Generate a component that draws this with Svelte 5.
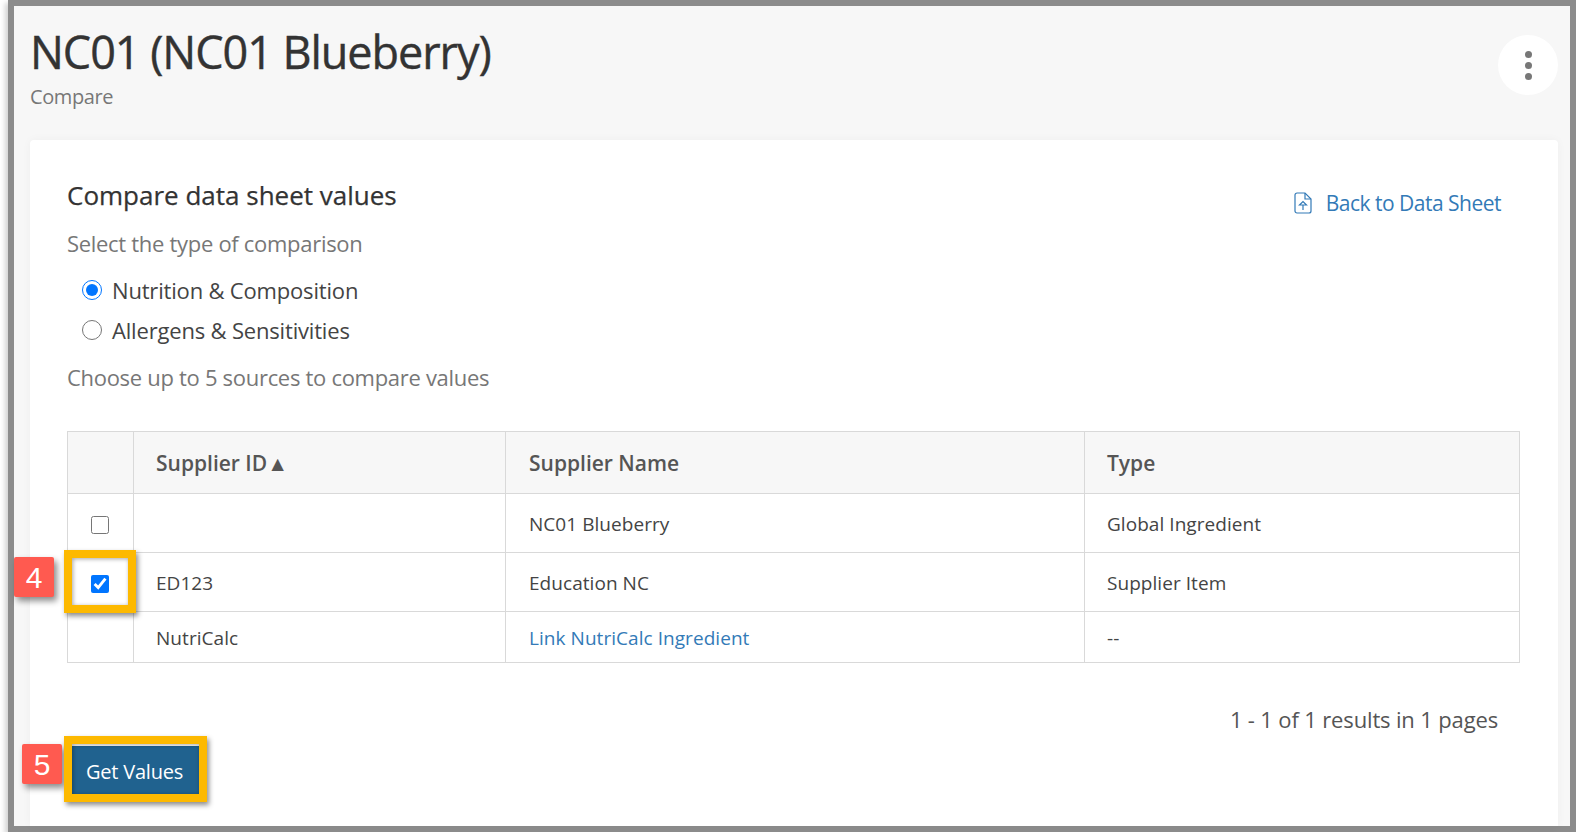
<script lang="ts">
  interface Row {
    id: string;
    name: string;
    type: string;
    checked?: boolean;
    noBox?: boolean;
    link?: boolean;
  }

  const rows: Row[] = [
    { id: '', name: 'NC01 Blueberry', type: 'Global Ingredient' },
    { id: 'ED123', name: 'Education NC', type: 'Supplier Item', checked: true },
    { id: 'NutriCalc', name: 'Link NutriCalc Ingredient', type: '--', noBox: true, link: true }
  ];

  let compareType = $state('nutrition');
</script>

<div class="frame">
  <header class="page-head">
    <div>
      <h1>NC01 (NC01 Blueberry)</h1>
      <div class="subtitle">Compare</div>
    </div>
    <button class="more" aria-label="More actions">
      <span></span><span></span><span></span>
    </button>
  </header>

  <section class="card">
    <div class="card-top">
      <h2>Compare data sheet values</h2>
      <a class="back" href="#back">
        <svg width="18" height="22" viewBox="0 0 18 22" fill="none" stroke="#337ab7" stroke-width="1.2">
          <path d="M3 1h8l6 6v12a2 2 0 0 1-2 2H3a2 2 0 0 1-2-2V3a2 2 0 0 1 2-2z" />
          <path d="M11 1v6h6" />
          <path d="M5.500 13L9 9.500l3.500 3.500zM9 13v5" />
        </svg>
        Back to Data Sheet
      </a>
    </div>

    <p class="hint first">Select the type of comparison</p>
    <label class="radio">
      <input type="radio" name="cmp" value="nutrition" bind:group={compareType} />
      Nutrition &amp; Composition
    </label>
    <label class="radio">
      <input type="radio" name="cmp" value="allergens" bind:group={compareType} />
      Allergens &amp; Sensitivities
    </label>
    <p class="hint second">Choose up to 5 sources to compare values</p>

    <table>
      <thead>
        <tr>
          <th class="c0"></th>
          <th class="c1">Supplier ID▲</th>
          <th class="c2">Supplier Name</th>
          <th>Type</th>
        </tr>
      </thead>
      <tbody>
        {#each rows as row}
          <tr class:short={row.noBox}>
            <td class="c0">
              {#if !row.noBox}
                <input type="checkbox" checked={row.checked} />
              {/if}
            </td>
            <td>{row.id}</td>
            <td class="c2">
              {#if row.link}
                <a href="#link">{row.name}</a>
              {:else}
                {row.name}
              {/if}
            </td>
            <td>{row.type}</td>
          </tr>
        {/each}
      </tbody>
    </table>

    <div class="pager">1 - 1 of 1 results in 1 pages</div>

    <button class="get">Get Values</button>
  </section>

  <!-- callouts drawn over the screenshot -->
  <div class="badge b4">4</div>
  <div class="mark m4"></div>
  <div class="badge b5">5</div>
  <div class="mark m5"></div>
</div>

<style>
  :global(body) {
    background: #fff;
    overflow: hidden;
  }

  .frame {
    position: relative;
    box-sizing: border-box;
    height: 832px;
    margin-left: 8px;
    padding: 0 12px 0 16px;
    border: 6px solid #8c8c8c;
    background: #f7f7f7;
    box-shadow: -3px 3px 5px rgba(0, 0, 0, 0.18);
    font-family: "Open Sans", "Liberation Sans", sans-serif;
    color: #333;
  }

  .page-head {
    display: flex;
    justify-content: space-between;
    height: 134px;
  }

  h1 {
    margin: 16px 0 0;
    font-size: 45px;
    line-height: 60px;
    font-weight: 400;
    color: #333;
    letter-spacing: -1.05px;
    -webkit-text-stroke: 0.4px #333;
  }

  .subtitle {
    margin-top: 1px;
    font-size: 20px;
    line-height: 28px;
    color: #777;
    letter-spacing: -0.4px;
  }

  .more {
    display: flex;
    flex-direction: column;
    justify-content: center;
    align-items: center;
    gap: 4px;
    width: 60px;
    height: 60px;
    margin-top: 29px;
    padding: 0;
    border: none;
    border-radius: 50%;
    background: #fff;
  }

  .more span {
    width: 7px;
    height: 7px;
    border-radius: 50%;
    background: #777;
  }

  .card {
    height: 686px;
    box-sizing: border-box;
    padding: 36px 38px 0 37px;
    background: #fff;
    border-radius: 4px 4px 0 0;
    box-shadow: 0 0 10px rgba(0, 0, 0, 0.04);
  }

  .card-top {
    display: flex;
    justify-content: space-between;
    align-items: flex-start;
  }

  h2 {
    margin: 0;
    font-size: 26px;
    line-height: 38px;
    font-weight: 400;
    color: #333;
    -webkit-text-stroke: 0.25px #333;
  }

  .back {
    display: flex;
    align-items: center;
    gap: 14px;
    margin: 12px 19px 0 0;
    color: #337ab7;
    font-size: 21px;
    line-height: 30px;
    letter-spacing: -0.5px;
    text-decoration: none;
  }

  .hint {
    margin: 0;
    font-size: 22px;
    line-height: 30px;
    color: #777;
    letter-spacing: -0.3px;
  }

  .hint.first {
    margin-top: 10px;
    margin-bottom: 12px;
  }

  .hint.second {
    margin-top: 12px;
    margin-bottom: 39px;
  }

  .radio {
    display: flex;
    align-items: center;
    gap: 10px;
    height: 40px;
    padding-left: 15px;
    font-size: 22px;
    letter-spacing: -0.18px;
    color: #444;
  }

  .radio input {
    width: 20px;
    height: 20px;
    margin: 0;
    accent-color: #0075ff;
  }

  table {
    width: 1453px;
    border-collapse: collapse;
    table-layout: fixed;
    font-size: 19px;
    letter-spacing: 0.05px;
    color: #444;
  }

  th,
  td {
    box-sizing: border-box;
    border: 1px solid #d9d9d9;
    padding: 0 22px;
    text-align: left;
  }

  th {
    height: 62px;
    background: #f7f7f7;
    font-size: 21px;
    font-weight: 600;
    color: #555;
    letter-spacing: 0;
  }

  td {
    height: 59px;
    padding-top: 2px;
  }

  tr.short td {
    height: 51px;
  }

  .c0 {
    text-align: center;
    padding: 0 2px 0 0;
  }

  td.c0 {
    padding-top: 2px;
  }

  th.c0 {
    width: 66px;
  }

  th.c1 {
    width: 372px;
  }

  th.c2 {
    width: 579px;
  }

  .c2 {
    padding-left: 23px;
  }

  td input {
    display: block;
    width: 18px;
    height: 18px;
    margin: 1px auto 0;
    accent-color: #0075ff;
  }

  td a {
    color: #337ab7;
    text-decoration: none;
  }

  .pager {
    margin-top: 41px;
    padding-right: 22px;
    text-align: right;
    font-size: 22px;
    line-height: 30px;
    color: #555;
    letter-spacing: -0.15px;
  }

  .get {
    display: block;
    width: 127px;
    height: 50px;
    margin: 12px 0 0 5px;
    padding: 0 2px 0 0;
    border: none;
    background: #20628f;
    color: #fff;
    font-family: inherit;
    font-size: 20px;
    letter-spacing: -0.2px;
  }

  .badge {
    position: absolute;
    width: 40px;
    height: 40px;
    border-radius: 2px;
    background: #ff5a50;
    color: #fff;
    font-family: "Liberation Sans", sans-serif;
    font-size: 30px;
    line-height: 41px;
    text-align: center;
    box-shadow: 3px 4px 6px rgba(0, 0, 0, 0.45);
  }

  .b4 {
    left: 0;
    top: 551px;
  }

  .b5 {
    left: 8px;
    top: 738px;
  }

  .mark {
    position: absolute;
    box-sizing: border-box;
    border: 8px solid #fdb900;
    box-shadow: 2px 3px 5px rgba(0, 0, 0, 0.45), inset 1px 1px 4px rgba(0, 0, 0, 0.35);
  }

  .m4 {
    left: 50px;
    top: 544px;
    width: 72px;
    height: 63px;
  }

  .m5 {
    left: 50px;
    top: 730px;
    width: 143px;
    height: 66px;
  }
</style>
